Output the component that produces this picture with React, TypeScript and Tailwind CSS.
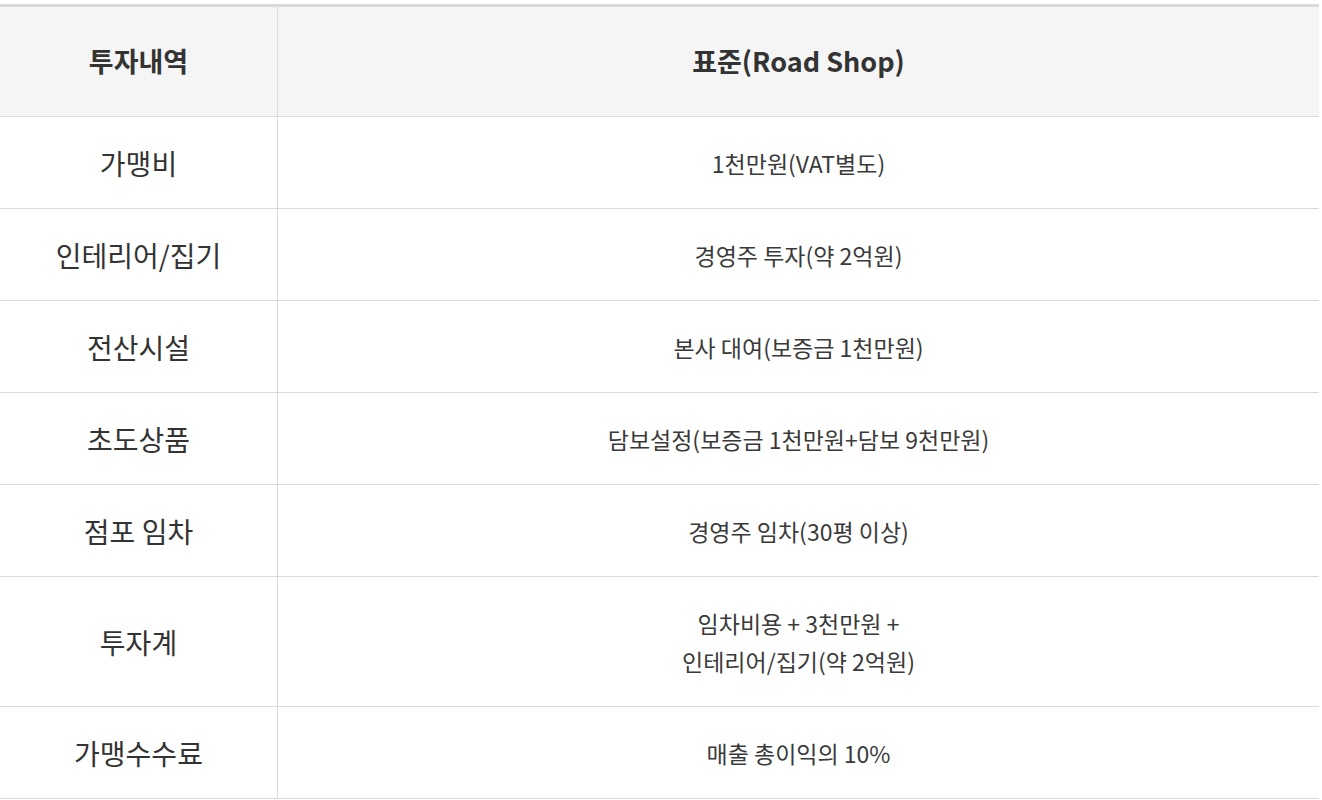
import React from 'react';

interface Row {
  label: string;
  value: string[];
  tall?: boolean;
}

const rows: Row[] = [
  { label: '가맹비', value: ['1천만원(VAT별도)'] },
  { label: '인테리어/집기', value: ['경영주 투자(약 2억원)'] },
  { label: '전산시설', value: ['본사 대여(보증금 1천만원)'] },
  { label: '초도상품', value: ['담보설정(보증금 1천만원+담보 9천만원)'] },
  { label: '점포 임차', value: ['경영주 임차(30평 이상)'] },
  { label: '투자계', value: ['임차비용 + 3천만원 +', '인테리어/집기(약 2억원)'], tall: true },
  { label: '가맹수수료', value: ['매출 총이익의 10%'] },
];

const App: React.FC = () => {
  return (
    <div className="bg-white pt-[4px] font-['Noto_Sans_CJK_KR','Noto_Sans',sans-serif] text-[#333]">
      <div className="w-[1319px] border-t-[3px] border-[#d9d9d9]">
        {/* header */}
        <div className="flex h-[110px] bg-[#f5f5f5] border-b border-[#dadada]">
          <div className="w-[278px] shrink-0 border-r border-[#dadada] flex items-center justify-center text-[27px] font-bold">
            투자내역
          </div>
          <div className="flex-1 flex items-center justify-center text-[27px] font-bold">
            표준(Road Shop)
          </div>
        </div>

        {rows.map((row) => (
          <div
            key={row.label}
            className={`flex border-b border-[#dadada] ${row.tall ? 'h-[130px]' : 'h-[92px]'}`}
          >
            <div className="w-[278px] shrink-0 border-r border-[#dadada] flex items-center justify-center text-[28px]">
              {row.label}
            </div>
            <div className="flex-1 flex flex-col items-center justify-center text-[23px] leading-[38px] text-[#3a3a3a]">
              {row.value.map((line) => (
                <span key={line}>{line}</span>
              ))}
            </div>
          </div>
        ))}
      </div>
    </div>
  );
};

export default App;
